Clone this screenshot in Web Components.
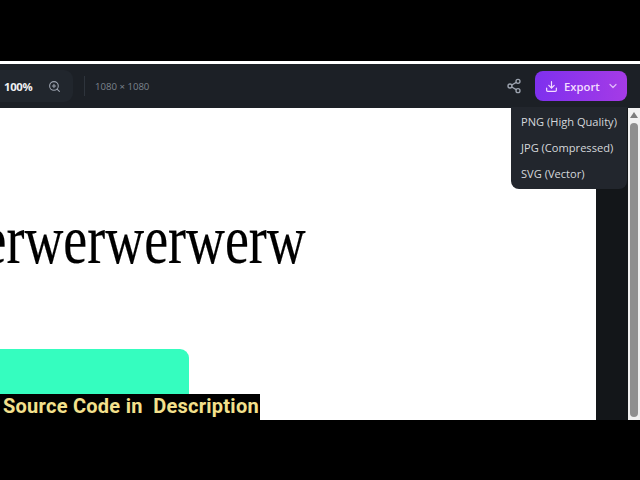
<!DOCTYPE html>
<html>
<head>
<meta charset="utf-8">
<style>
html,body{margin:0;padding:0;width:640px;height:480px;overflow:hidden;background:#000;}
</style>
</head>
<body>
<editor-frame>
  <editor-toolbar slot="bar"></editor-toolbar>
  <work-canvas slot="canvas">erwerwerwerw</work-canvas>
  <side-rail slot="rail"></side-rail>
</editor-frame>
<script>
class EditorFrame extends HTMLElement{
    constructor(){
        super()
        this.attachShadow({mode:'open'}).innerHTML = `
        <style>
        :host{display:flex;flex-direction:column;width:640px;height:480px;background:#000;position:relative;overflow:hidden;}
        .top{height:61px;background:#000;}
        .line{height:3px;background:#fff;}
        .main{height:312px;display:flex;}
        .bottom{height:60px;background:#000;}
        .caption{
            position:absolute;left:0;top:394px;width:260px;height:26px;background:#000;
            color:#f3e08c;font:700 20px/25px Roboto,sans-serif;letter-spacing:.26px;padding-left:3px;box-sizing:border-box;white-space:pre;
        }
        </style>
        <div class="top"></div>
        <div class="line"></div>
        <slot name="bar"></slot>
        <div class="main">
            <slot name="canvas"></slot>
            <slot name="rail"></slot>
        </div>
        <div class="bottom"></div>
        <div class="caption">Source Code in  Description</div>
        `
    }
}

class EditorToolbar extends HTMLElement{
    constructor(){
        super()
        this.attachShadow({mode:'open'}).innerHTML = `
        <style>
        :host{display:flex;align-items:center;height:44px;background:#1c2026;font-family:'Open Sans',sans-serif;position:relative;box-sizing:border-box;}
        .zoom{display:flex;align-items:center;height:32px;width:73px;background:#21262d;border-radius:0 9px 9px 0;box-sizing:border-box;padding-left:4px;gap:13px;}
        .pct{color:#eef0f2;font-size:11.3px;font-weight:700;letter-spacing:-.3px;width:31px;}
        .zoom svg{width:13px;height:13px;color:#9ca3af;}
        .sep{width:1px;height:20px;background:#2e343c;margin-left:11px;}
        .size{color:#7d848d;font-size:9.6px;margin-left:10px;}
        .grow{flex:1;}
        .share{width:16px;height:16px;color:#9ca3af;margin-right:13px;}
        .export{
            display:flex;align-items:center;width:92px;height:30px;margin-right:13px;border-radius:8px;box-sizing:border-box;padding-left:10px;
            background:linear-gradient(90deg,#7e30ee,#a53be6);color:#f3dcff;font-size:11.3px;font-weight:600;
        }
        .export .dl{width:13px;height:13px;margin-right:6px;}
        .export .chev{width:12px;height:12px;margin-left:7px;opacity:.8;}
        </style>
        <div class="zoom">
            <span class="pct">100%</span>
            <svg viewBox="0 0 24 24" fill="none" stroke="currentColor" stroke-width="2" stroke-linecap="round" stroke-linejoin="round"><circle cx="11" cy="11" r="8"/><path d="m21 21-4.3-4.3M11 8v6M8 11h6"/></svg>
        </div>
        <div class="sep"></div>
        <span class="size">1080 × 1080</span>
        <div class="grow"></div>
        <svg class="share" viewBox="0 0 24 24" fill="none" stroke="currentColor" stroke-width="2" stroke-linecap="round" stroke-linejoin="round"><circle cx="18" cy="5" r="3"/><circle cx="6" cy="12" r="3"/><circle cx="18" cy="19" r="3"/><path d="m8.6 13.5 6.8 4M15.4 6.5l-6.8 4"/></svg>
        <div class="export">
            <svg class="dl" viewBox="0 0 24 24" fill="none" stroke="currentColor" stroke-width="2.2" stroke-linecap="round" stroke-linejoin="round"><path d="M21 15v4a2 2 0 0 1-2 2H5a2 2 0 0 1-2-2v-4M7 10l5 5 5-5M12 15V3"/></svg>
            <span>Export</span>
            <svg class="chev" viewBox="0 0 24 24" fill="none" stroke="currentColor" stroke-width="2.4" stroke-linecap="round" stroke-linejoin="round"><path d="m6 9 6 6 6-6"/></svg>
        </div>
        <export-menu></export-menu>
        `
    }
}

class ExportMenu extends HTMLElement{
    constructor(){
        super()
        this.attachShadow({mode:'open'}).innerHTML = `
        <style>
        :host{
            position:absolute;left:511px;top:43px;width:116px;height:82px;z-index:3;display:flex;flex-direction:column;
            background:#22262d;border-radius:0 0 8px 8px;box-sizing:border-box;padding-top:2px;
            font-family:'Open Sans',sans-serif;color:#d5d8dc;font-size:11.1px;
        }
        div{height:26px;line-height:26px;padding-left:10px;white-space:nowrap;}
        </style>
        <div>PNG (High Quality)</div>
        <div>JPG (Compressed)</div>
        <div>SVG (Vector)</div>
        `
    }
}

class WorkCanvas extends HTMLElement{
    constructor(){
        super()
        this.attachShadow({mode:'open'}).innerHTML = `
        <style>
        :host{display:flex;flex-direction:column;width:596px;height:312px;background:#fff;overflow:hidden;}
        .title{
            height:241px;box-sizing:border-box;padding-top:96px;width:306px;display:flex;justify-content:flex-end;
            font:400 70px/72px 'Liberation Serif',serif;color:#000;white-space:nowrap;
        }
        .title span{display:inline-block;transform:scaleX(.77);transform-origin:right center;-webkit-text-stroke:.2px #000;}
        .block{width:189px;height:71px;background:#35fdbf;border-radius:0 9px 0 0;}
        </style>
        <div class="title"><span><slot></slot></span></div>
        <div class="block"></div>
        `
    }
}

class SideRail extends HTMLElement{
    constructor(){
        super()
        this.attachShadow({mode:'open'}).innerHTML = `
        <style>
        :host{display:flex;width:44px;height:312px;}
        .dark{width:32px;background:#131619;}
        .bar{width:12px;background:#f1f1f1;display:flex;flex-direction:column;align-items:center;}
        .up{width:0;height:0;border-left:4px solid transparent;border-right:4px solid transparent;border-bottom:6px solid #7d7d7d;margin-top:4px;}
        .thumb{width:8px;flex:1;margin-top:5px;margin-bottom:3px;background:#8f8f8f;border-radius:4px;}
        </style>
        <div class="dark"></div>
        <div class="bar"><div class="up"></div><div class="thumb"></div></div>
        `
    }
}

customElements.define('export-menu', ExportMenu)
customElements.define('editor-frame', EditorFrame)
customElements.define('editor-toolbar', EditorToolbar)
customElements.define('work-canvas', WorkCanvas)
customElements.define('side-rail', SideRail)
</script>
</body>
</html>
